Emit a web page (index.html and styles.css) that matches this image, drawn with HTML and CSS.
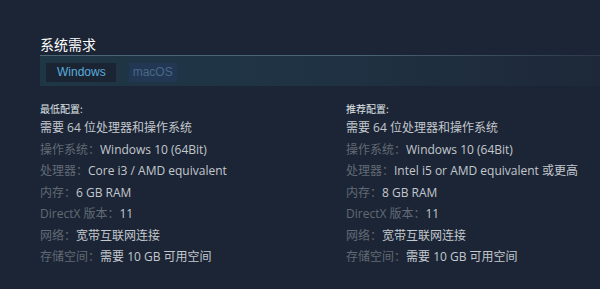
FILE: index.html
```html
<!DOCTYPE html>
<html lang="zh-CN">
<head>
<meta charset="utf-8">
<link rel="stylesheet" href="styles.css">
</head>
<body>
<div class="sysreq">
  <h2 class="title">系统需求</h2>
  <div class="tabs">
    <div class="tab active">Windows</div>
    <div class="tab">macOS</div>
  </div>
  <div class="cols">
    <div class="col">
      <div class="head">最低配置:</div>
      <ul class="list">
        <li>需要 64 位处理器和操作系统</li>
        <li><span class="lbl">操作系统：</span>Windows 10 (64Bit)</li>
        <li><span class="lbl">处理器：</span>Core i3 / AMD equivalent</li>
        <li><span class="lbl">内存：</span>6 GB RAM</li>
        <li><span class="lbl">DirectX 版本：</span>11</li>
        <li><span class="lbl">网络：</span>宽带互联网连接</li>
        <li><span class="lbl">存储空间：</span>需要 10 GB 可用空间</li>
      </ul>
    </div>
    <div class="col">
      <div class="head">推荐配置:</div>
      <ul class="list">
        <li>需要 64 位处理器和操作系统</li>
        <li><span class="lbl">操作系统：</span>Windows 10 (64Bit)</li>
        <li><span class="lbl">处理器：</span>Intel i5 or AMD equivalent 或更高</li>
        <li><span class="lbl">内存：</span>8 GB RAM</li>
        <li><span class="lbl">DirectX 版本：</span>11</li>
        <li><span class="lbl">网络：</span>宽带互联网连接</li>
        <li><span class="lbl">存储空间：</span>需要 10 GB 可用空间</li>
      </ul>
    </div>
  </div>
</div>
</body>
</html>
```
FILE: styles.css
```css
html, body {
  margin: 0;
  padding: 0;
  background: #1c2536;
  width: 600px;
  height: 289px;
  overflow: hidden;
  font-family: "Open Sans", "Noto Sans CJK SC", sans-serif;
}
.sysreq {
  padding: 34px 0 0 40px;
}
.title {
  margin: 0;
  font-size: 14px;
  font-weight: normal;
  line-height: 21px;
  color: #ffffff;
  height: 21px;
  font-family: "Noto Sans CJK SC", sans-serif;
}
.title::after {
  content: "";
  display: block;
  height: 1px;
  background: linear-gradient(to right, #4b6577 0%, #4b6577 55%, #2c394a 100%);
}
.tabs {
  display: flex;
  align-items: flex-start;
  gap: 13px;
  height: 30px;
  padding: 7px 0 0 6px;
  box-sizing: border-box;
  margin-top: 1px;
  background: linear-gradient(to right, #1f3645 0%, #1f3344 45%, #1e2839 100%);
}
.tab {
  font-family: "Liberation Sans", sans-serif;
  font-size: 12px;
  line-height: 19px;
  height: 19px;
  padding: 0 4px;
  color: #4a6886;
  background: #213754;
}
.tab.active {
  padding: 0 10px 0 11px;
  color: #5aacdb;
  background: #1b2433;
}
.cols {
  display: grid;
  grid-template-columns: 306px 1fr;
  padding-top: 16px;
}
.head {
  font-size: 10px;
  line-height: 14px;
  color: #dfe3e6;
  font-family: "Noto Sans CJK SC", sans-serif;
}
.list {
  list-style: none;
  margin: 1px 0 0;
  padding: 0;
}
.list li {
  font-size: 12px;
  line-height: 21.5px;
  color: #c3c8cd;
  white-space: nowrap;
}
.lbl {
  color: #616a74;
}
```
